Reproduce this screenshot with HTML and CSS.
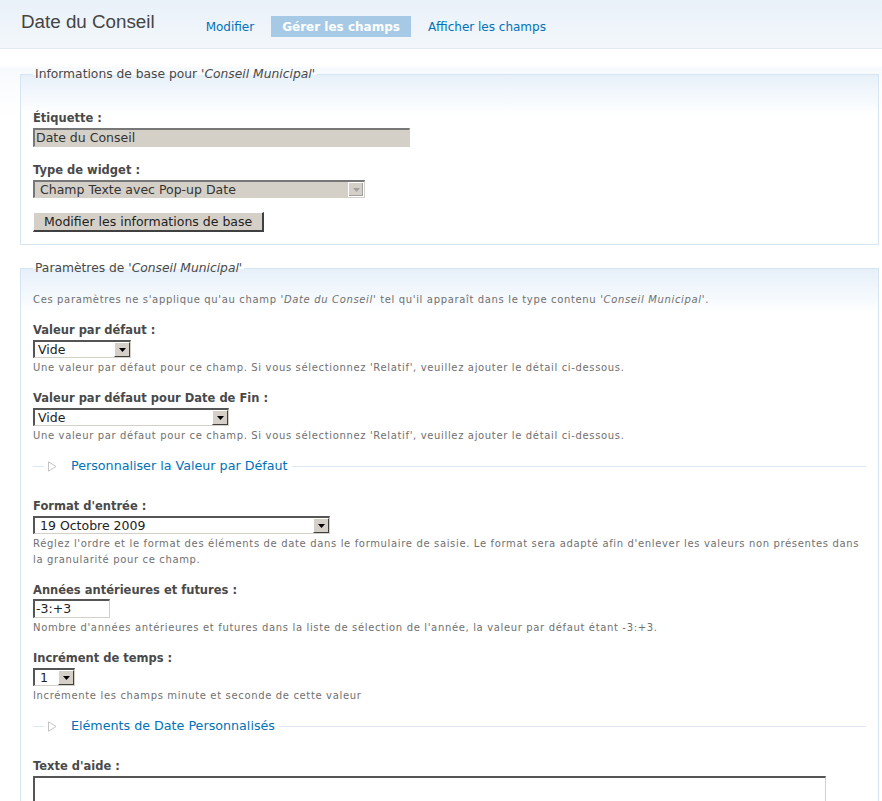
FILE: index.html
```html
<!DOCTYPE html>
<html lang="fr">
<head>
<meta charset="utf-8">
<title>Date du Conseil</title>
<link rel="stylesheet" href="styles.css">
</head>
<body>
<div class="header">
  <h1 class="title">Date du Conseil</h1>
  <ul class="tabs">
    <li class="tab"><a href="#">Modifier</a></li>
    <li class="tab active"><a href="#">Gérer les champs</a></li>
    <li class="tab"><a href="#">Afficher les champs</a></li>
  </ul>
</div>
<div class="content">
  <fieldset class="box box-basic">
    <legend>Informations de base pour '<em>Conseil Municipal</em>'</legend>
    <div class="form-item">
      <label>Étiquette :</label>
      <div class="text-input disabled wide">Date du Conseil</div>
    </div>
    <div class="form-item">
      <label>Type de widget :</label>
      <div class="select disabled w-widget"><span class="sel-text">Champ Texte avec Pop-up Date</span><span class="sel-btn"><svg width="7" height="4" viewBox="0 0 7 4"><path d="M0 0H7L3.5 4Z" fill="#a0a0a0"/></svg></span></div>
    </div>
    <div class="button">Modifier les informations de base</div>
  </fieldset>

  <fieldset class="box box-params">
    <legend>Paramètres de '<em>Conseil Municipal</em>'</legend>
    <p class="intro">Ces paramètres ne s'applique qu'au champ '<em>Date du Conseil</em>' tel qu'il apparaît dans le type contenu '<em>Conseil Municipal</em>'.</p>

    <div class="form-item">
      <label>Valeur par défaut :</label>
      <div class="select w-vide"><span class="sel-text">Vide</span><span class="sel-btn"><svg width="7" height="4" viewBox="0 0 7 4"><path d="M0 0H7L3.5 4Z" fill="#000"/></svg></span></div>
      <div class="desc">Une valeur par défaut pour ce champ. Si vous sélectionnez 'Relatif', veuillez ajouter le détail ci-dessous.</div>
    </div>
    <div class="form-item">
      <label>Valeur par défaut pour Date de Fin :</label>
      <div class="select w-fin"><span class="sel-text">Vide</span><span class="sel-btn"><svg width="7" height="4" viewBox="0 0 7 4"><path d="M0 0H7L3.5 4Z" fill="#000"/></svg></span></div>
      <div class="desc">Une valeur par défaut pour ce champ. Si vous sélectionnez 'Relatif', veuillez ajouter le détail ci-dessous.</div>
    </div>

    <fieldset class="collapsed">
      <legend><svg class="tri" width="9" height="11" viewBox="0 0 9 11"><path d="M0.5 0.8L8 5.5L0.5 10.2Z" fill="none" stroke="#c4c4c4"/></svg><a href="#">Personnaliser la Valeur par Défaut</a></legend>
    </fieldset>

    <div class="form-item">
      <label>Format d'entrée :</label>
      <div class="select w-format"><span class="sel-text sel-pad">19 Octobre 2009</span><span class="sel-btn"><svg width="7" height="4" viewBox="0 0 7 4"><path d="M0 0H7L3.5 4Z" fill="#000"/></svg></span></div>
      <div class="desc">Réglez l'ordre et le format des éléments de date dans le formulaire de saisie. Le format sera adapté afin d'enlever les valeurs non présentes dans la granularité pour ce champ.</div>
    </div>
    <div class="form-item">
      <label>Années antérieures et futures :</label>
      <div class="text-input w-years">-3:+3</div>
      <div class="desc">Nombre d'années antérieures et futures dans la liste de sélection de l'année, la valeur par défaut étant -3:+3.</div>
    </div>
    <div class="form-item">
      <label>Incrément de temps :</label>
      <div class="select w-incr"><span class="sel-text sel-pad">1</span><span class="sel-btn"><svg width="7" height="4" viewBox="0 0 7 4"><path d="M0 0H7L3.5 4Z" fill="#000"/></svg></span></div>
      <div class="desc">Incrémente les champs minute et seconde de cette valeur</div>
    </div>

    <fieldset class="collapsed">
      <legend><svg class="tri" width="9" height="11" viewBox="0 0 9 11"><path d="M0.5 0.8L8 5.5L0.5 10.2Z" fill="none" stroke="#c4c4c4"/></svg><a href="#">Eléments de Date Personnalisés</a></legend>
    </fieldset>

    <div class="form-item">
      <label>Texte d'aide :</label>
      <div class="textarea"></div>
    </div>
  </fieldset>
</div>
</body>
</html>
```

FILE: styles.css
```css
* { box-sizing: border-box; }

html, body {
  margin: 0;
  padding: 0;
}

body {
  font-family: "DejaVu Sans", Verdana, sans-serif;
  font-size: 12px;
  color: #494949;
  background: #fff;
  overflow: hidden;
}

a { color: #0072b9; text-decoration: none; }

/* Header */
.header {
  height: 49px;
  display: flex;
  align-items: flex-start;
  padding-left: 21px;
  background: linear-gradient(#e9f1f9, #f3f7fb);
  border-bottom: 1px solid #e1e9f1;
}

.title {
  margin: 11px 0 0 0;
  font-family: "Liberation Sans", Arial, sans-serif;
  font-weight: normal;
  font-size: 18.8px;
  line-height: 22px;
  color: #444;
}

.tabs {
  list-style: none;
  margin: 16px 0 0 39px;
  padding: 0;
  display: flex;
  gap: 5px;
}

.tab a {
  display: block;
  height: 21px;
  line-height: 23px;
  padding: 0 12px;
  font-size: 12px;
}

.tab.active a {
  background: #a6cae6;
  color: #fff;
  font-weight: bold;
  padding: 0 11px;
}

/* Content */
.content {
  padding: 0 3px 0 20px;
  background: linear-gradient(#f7fafd 0, #fff 50px);
}

.box {
  margin: 0;
  border: 1px solid #d6e5f2;
  padding: 0 12px 12px;
  background: linear-gradient(#e7f0f9 0, #f3f8fc 20px, #fff 40px);
}

.box legend {
  padding: 0 2px;
  font-size: 12.3px;
  line-height: 14px;
  color: #494949;
}

.box-basic {
  margin-top: 18px;
  padding-top: 29px;
}

.box-basic .form-item {
  margin-bottom: 15px;
}

.box-params {
  margin-top: 16px;
  padding-top: 17px;
  padding-bottom: 40px;
  background: linear-gradient(#e7f0f9 0, #f3f8fc 25px, #fff 45px);
}

.intro {
  margin: 0 0 14px;
  font-size: 10px;
  line-height: 16px;
  color: #707070;
  letter-spacing: 0.65px;
}

.form-item {
  margin-bottom: 14px;
}

.form-item label {
  display: block;
  font-weight: bold;
  font-size: 11.5px;
  line-height: 16px;
  margin-bottom: 2px;
  color: #494949;
}

.desc {
  margin-top: 2px;
  font-size: 10px;
  line-height: 16px;
  color: #707070;
  letter-spacing: 0.65px;
}

/* Controls */
.text-input {
  height: 19px;
  line-height: 16px;
  padding: 0 1px;
  font-size: 12.5px;
  color: #222;
  background: #fff;
  border-top: 2px solid #555;
  border-left: 2px solid #555;
  border-right: 1px solid #d4d0c8;
  border-bottom: 1px solid #d4d0c8;
}

.text-input.disabled {
  background: #d4d0c8;
  color: #333;
  border-top-color: #777;
  border-left-color: #777;
}

.wide { width: 377px; }
.w-years { width: 77px; margin-top: -1px; }

.select {
  display: flex;
  height: 18px;
  background: #fff;
  border-top: 2px solid #555;
  border-left: 2px solid #555;
  border-right: 1px solid #d4d0c8;
  border-bottom: 1px solid #d4d0c8;
  font-size: 12.5px;
  color: #222;
}

.select.disabled {
  background: #d4d0c8;
  border-top-color: #777;
  border-left-color: #777;
  color: #333;
}

.sel-text {
  flex: 1;
  line-height: 15px;
  padding-left: 3px;
  white-space: nowrap;
  overflow: hidden;
}

.sel-pad { padding-left: 5px; }
.disabled .sel-text { padding-left: 5px; }

.sel-btn {
  width: 16px;
  height: 15px;
  display: flex;
  align-items: center;
  justify-content: center;
  background: #d4d0c8;
  border-top: 1px solid #fff;
  border-left: 1px solid #fff;
  border-right: 1px solid #404040;
  border-bottom: 1px solid #404040;
}

.disabled .sel-btn {
  border-color: #fff;
  box-shadow: inset -1px -1px 0 #a0a0a0;
}

.w-widget { width: 332px; }
.w-vide { width: 98px; }
.w-fin { width: 196px; }
.w-format { width: 297px; }
.w-incr { width: 42px; }

.button {
  display: inline-block;
  margin-top: -1px;
  height: 20px;
  line-height: 17px;
  padding: 0 10px;
  font-size: 12.5px;
  color: #222;
  background: #d4d0c8;
  border-top: 1px solid #fff;
  border-left: 1px solid #fff;
  border-right: 2px solid #404040;
  border-bottom: 2px solid #404040;
}

/* Collapsed fieldsets */
.collapsed {
  margin: 15px 0 25px;
  padding: 0;
  border: 0;
  border-top: 1px solid #dbe8f3;
  min-height: 0;
}

.collapsed legend {
  margin-left: 11px;
  padding: 0 4px;
  font-size: 12.7px;
  line-height: 14px;
  display: flex;
  align-items: center;
}

.tri {
  margin-right: 14px;
}

.textarea {
  width: 793px;
  height: 60px;
  background: #fff;
  border-top: 2px solid #555;
  border-left: 2px solid #555;
  border-right: 1px solid #d4d0c8;
  border-bottom: 1px solid #d4d0c8;
}
```
